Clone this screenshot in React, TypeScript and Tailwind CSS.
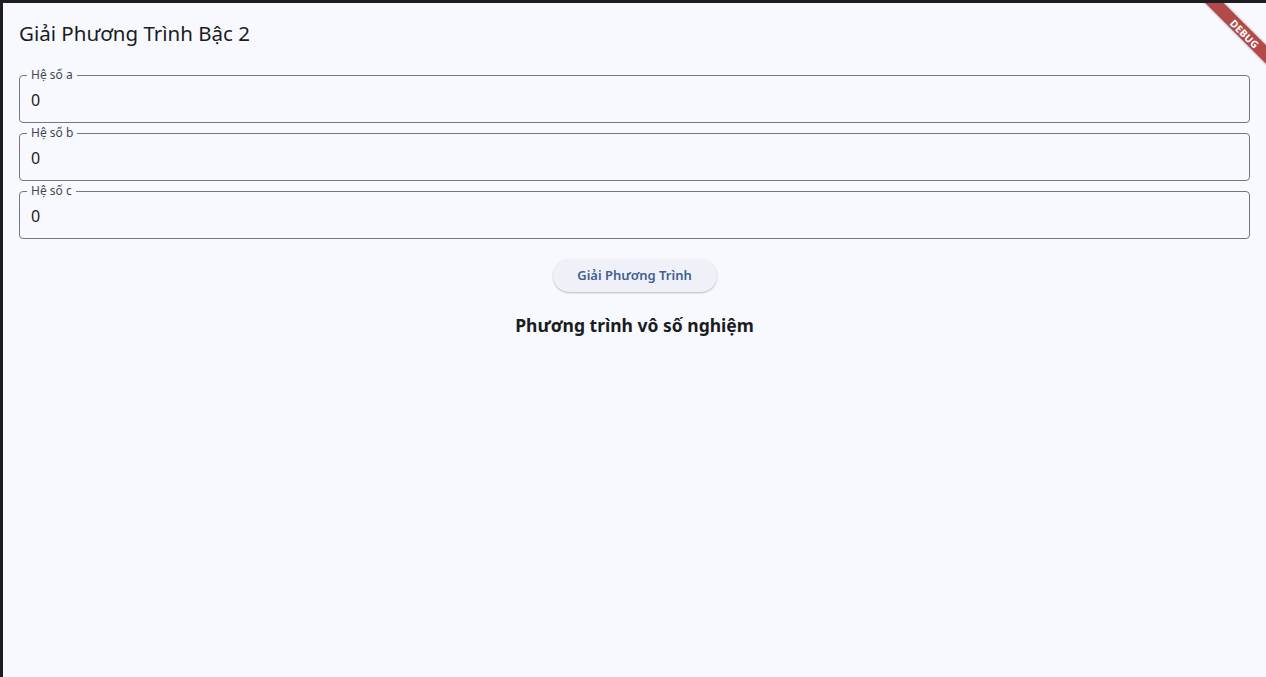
import React from "react";

const font = { fontFamily: '"Noto Sans", "Open Sans", sans-serif' };

function CoefField({ label, value }: { label: string; value: string }) {
  return (
    <div className="relative h-[48px] rounded-[4px] border border-[#74777f] flex items-center px-[11px]">
      <span className="absolute left-[7px] top-[-9px] bg-[#f8f9ff] px-[4px] text-[12px] leading-[15px] text-[#44474e]">
        {label}
      </span>
      <span className="text-[16px] text-[#191c20] pt-[2px]">{value}</span>
    </div>
  );
}

export default function App() {
  return (
    <div
      className="relative h-[677px] w-full overflow-hidden border-t-[3px] border-l-[3px] border-[#1e1e22] bg-[#f8f9ff]"
      style={font}
    >
      <div className="px-[16px] pt-[16px]">
        <h1 className="text-[20.5px] leading-[28px] text-[#191c20] font-normal">
          Giải Phương Trình Bậc 2
        </h1>

        <div className="mt-[28px] flex flex-col gap-[10px]">
          <CoefField label="Hệ số a" value="0" />
          <CoefField label="Hệ số b" value="0" />
          <CoefField label="Hệ số c" value="0" />
        </div>

        <div className="mt-[20px] flex flex-col items-center">
          <button className="h-[33px] w-[164px] rounded-full bg-[#f0f1f8] text-[13px] font-semibold text-[#415f91] shadow-[0_1px_2px_rgba(0,0,0,0.25)]">
            Giải Phương Trình
          </button>
          <p className="mt-[20px] text-[17.5px] font-bold text-[#191c20]">
            Phương trình vô số nghiệm
          </p>
        </div>
      </div>

      <div className="absolute left-[1182px] top-[24px] h-[13px] w-[120px] rotate-45 bg-[#b34a4a] shadow-[0_0_3px_rgba(0,0,0,0.35)] flex items-center justify-center">
        <span className="text-[10px] font-bold leading-none tracking-[0.3px] text-white">
          DEBUG
        </span>
      </div>
    </div>
  );
}
